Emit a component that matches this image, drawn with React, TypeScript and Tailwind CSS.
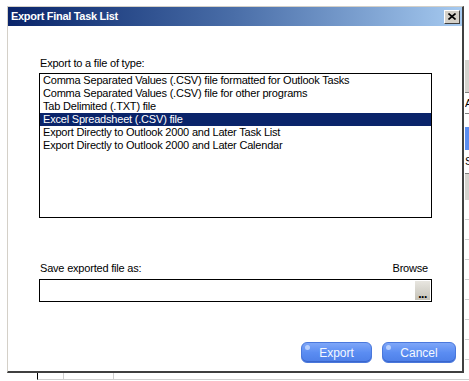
import React from "react";

const items = [
  "Comma Separated Values (.CSV) file formatted for Outlook Tasks",
  "Comma Separated Values (.CSV) file for other programs",
  "Tab Delimited (.TXT) file",
  "Excel Spreadsheet (.CSV) file",
  "Export Directly to Outlook 2000 and Later Task List",
  "Export Directly to Outlook 2000 and Later Calendar",
];

const tight = { letterSpacing: "-0.2px" };

function BlueButton({ label, w }: { label: string; w: string }) {
  return (
    <button
      className={`relative h-[21px] ${w} rounded-[6px] border border-[#4a78dc] bg-gradient-to-b from-[#7ea6f8] via-[#5b8df2] to-[#4d7fe8] text-[12px] leading-none text-[#f4f8ff] shadow-[inset_0_-1px_0_#3a66cc]`}
    >
      <span className="absolute left-[3px] top-[2px] h-[5px] w-[5px] rounded-full bg-[#c9dcff] opacity-80" />
      {label}
    </button>
  );
}

export default function App() {
  return (
    <div
      className="flex h-[381px] w-[469px] overflow-hidden bg-white"
      style={{ fontFamily: '"Liberation Sans", Arial, sans-serif' }}
    >
      {/* left column: dialog window + grid strip below */}
      <div className="flex w-[465px] shrink-0 flex-col">
        <div className="ml-[7px] mt-[6px] flex h-[367px] w-[457px] flex-col border-b-2 border-l border-r-2 border-t border-b-[#404040] border-l-[#d4d0c8] border-r-[#404040] border-t-[#d4d0c8] bg-white">
          {/* title bar */}
          <div className="flex h-[19px] items-center justify-between bg-gradient-to-r from-[#0a246a] via-[#4a6ea8] to-[#a6caf0] pl-[3px] pr-[2px]">
            <span className="text-[11px] font-bold leading-none tracking-[-0.3px] text-white">
              Export Final Task List
            </span>
            <div className="flex h-[14px] w-[16px] items-center justify-center border border-b-[#404040] border-l-white border-r-[#404040] border-t-white bg-[#d4d0c8]">
              <svg width="8" height="7" viewBox="0 0 8 7">
                <path d="M0.5 0.5 L7.5 6.5 M7.5 0.5 L0.5 6.5" stroke="black" strokeWidth="1.6" />
              </svg>
            </div>
          </div>

          {/* body */}
          <div className="flex flex-1 flex-col pl-[31px]">
            <div className="mt-[31px] h-[13px] pl-px text-[11px] leading-[13px] text-black" style={tight}>
              Export to a file of type:
            </div>
            <div className="mt-[3px] h-[145px] w-[393px] border border-black bg-white">
              {items.map((t, i) => (
                <div
                  key={t}
                  className={`h-[13px] pl-[3px] text-[11px] leading-[13px] ${
                    i === 3 ? "bg-[#0a246a] text-white" : "text-black"
                  }`}
                  style={tight}
                >
                  {t}
                </div>
              ))}
            </div>

            <div
              className="mt-[44px] flex h-[13px] w-[393px] items-center justify-between pl-px pr-[4px] text-[11px] leading-[13px] text-black"
              style={tight}
            >
              <span>Save exported file as:</span>
              <span>Browse</span>
            </div>
            <div className="mt-[4px] flex h-[23px] w-[393px] justify-end border border-black bg-white p-px">
              <div className="flex w-[15px] items-end justify-center bg-gradient-to-b from-[#e8e6e0] to-[#c4c2b8] pb-[2px]">
                <span className="text-[12px] font-bold leading-[8px] tracking-[-0.5px] text-black">...</span>
              </div>
            </div>

            <div className="mt-[40px] flex justify-end gap-[10px] pr-[6px]">
              <BlueButton label="Export" w="w-[71px]" />
              <BlueButton label="Cancel" w="w-[74px]" />
            </div>
          </div>
        </div>

        {/* spreadsheet grid visible below the dialog */}
        <div className="flex h-[8px] pl-[37px]">
          <div className="h-[7px] w-[26px] border-b border-l border-b-[#d0d0d0] border-l-black" />
          <div className="h-[7px] w-[50px] border-b border-l border-[#d0d0d0]" />
          <div className="h-[7px] flex-1 border-b border-l border-[#d0d0d0]" />
        </div>
      </div>

      {/* spreadsheet visible to the right of the dialog */}
      <div className="flex w-[4px] flex-col overflow-hidden text-[11px] leading-none text-black">
        <div className="h-[60px]" />
        <div className="h-[32px] bg-[#d6d3ce]" />
        <div className="h-px bg-[#808080]" />
        <div className="flex h-[20px] items-center">A</div>
        <div className="h-px bg-[#808080]" />
        <div className="h-[13px]" />
        <div className="h-[23px] bg-[#5b8ef0]" />
        <div className="flex h-[23px] items-center">S</div>
        <div className="h-px bg-[#808080]" />
        <div className="h-[26px] bg-[#d6d3ce]" />
        {[0, 1, 2, 3, 4, 5, 6, 7, 8].map((i) => (
          <div key={i} className="h-[20px] border-b border-[#d0d0d0]" />
        ))}
      </div>
    </div>
  );
}
